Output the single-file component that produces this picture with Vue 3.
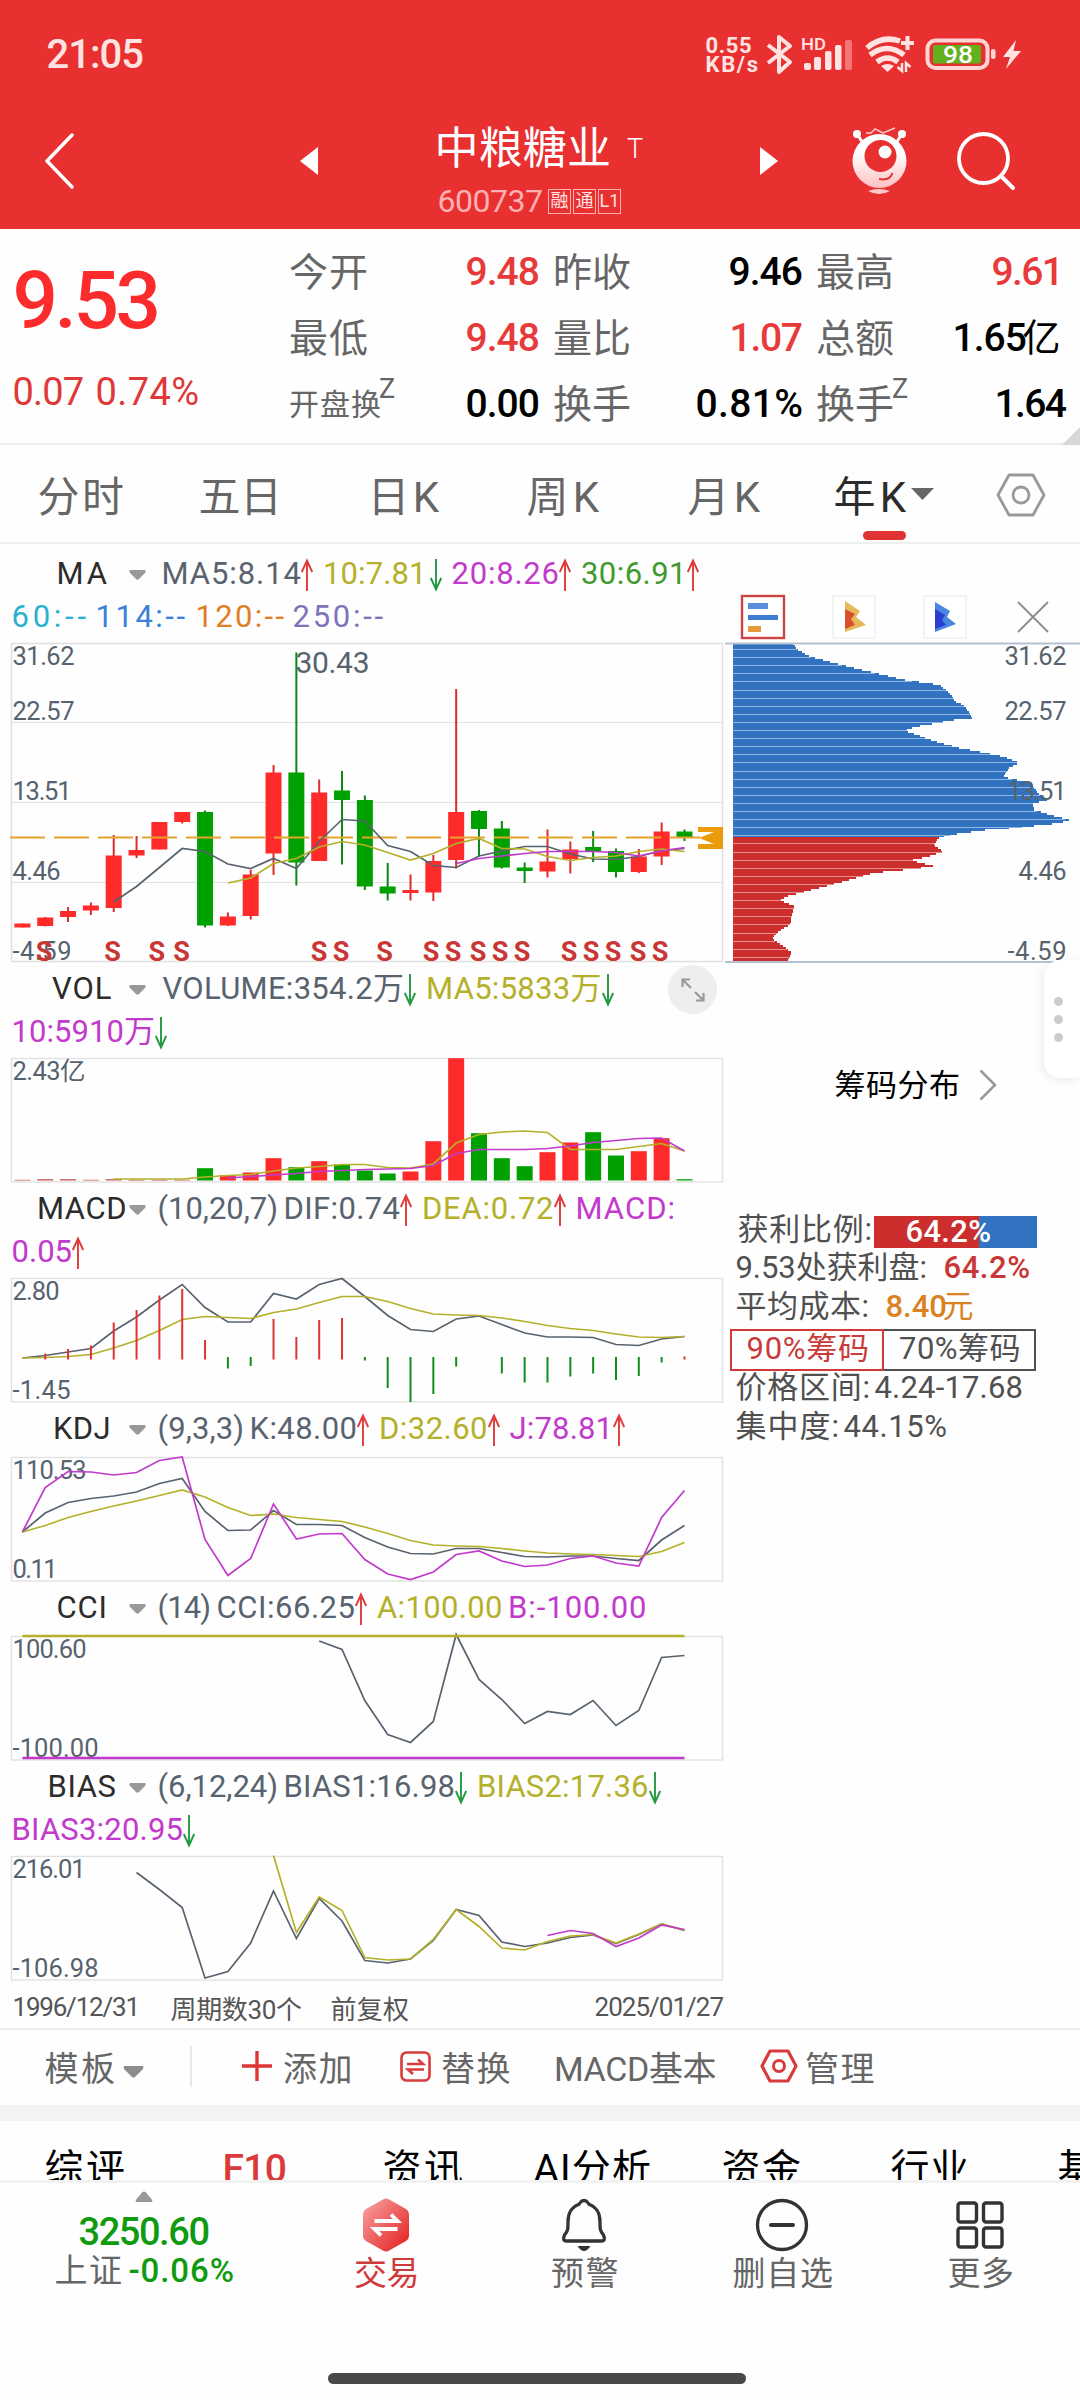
<script setup>
// Spreads a text's letters so that its ink fills the given width.
const fitText = (el, { value }) => {
  if (!value) return
  el.style.letterSpacing = '0px'
  el.style.width = 'auto'
  const n = [...el.textContent].length
  const natural = el.getBoundingClientRect().width
  el.style.letterSpacing = (n > 1 ? (value + 3 - natural) / (n - 1) : 0) + 'px'
  el.style.width = value + 'px'
}
const vFit = { mounted: fitText, updated: fitText }

const quotes = [
  [
    { label: '今开', lw: 76, value: '9.48', w: 70, tone: 'up' },
    { label: '昨收', lw: 75, value: '9.46', w: 70 },
    { label: '最高', lw: 75, value: '9.61', w: 68, tone: 'up' },
  ],
  [
    { label: '最低', lw: 76, value: '9.48', w: 70, tone: 'up' },
    { label: '量比', lw: 75, value: '1.07', w: 69, tone: 'up' },
    { label: '总额', lw: 75, value: '1.65', w: 70, unit: '亿' },
  ],
  [
    { label: '开盘换', lw: 89, small: true, sup: 'Z', value: '0.00', w: 70 },
    { label: '换手', lw: 75, value: '0.81%', w: 103 },
    { label: '换手', lw: 75, sup: 'Z', value: '1.64', w: 68 },
  ],
]

const periods = [
  { t: '分时', w: 82, gap: 39 },
  { t: '五日', w: 79, gap: 79 },
  { t: '日K', w: 67, gap: 90 },
  { t: '周K', w: 68, gap: 92 },
  { t: '月K', w: 68, gap: 93 },
  { t: '年K', w: 68, gap: 78, active: true },
]

const slate = '#58636f'
const olive = '#b5b02a'
const violet = '#c23acb'

const X0 = 22.4
const STEP = 22.83
const cx = (i) => X0 + STEP * i
const line = (start, ys) => ys.map((y, k) => `${cx(start + k).toFixed(1)},${y}`).join(' ')

// [rising, high, body top, body bottom, low]
const candles = [
  [1, 280.5, 280.5, 284.5, 284.5], [1, 274, 274.5, 283, 283.5], [1, 264, 268, 274, 279],
  [1, 259.5, 262.5, 267.5, 272], [1, 192, 212.5, 265, 269], [1, 193, 207, 212.5, 215],
  [1, 179, 179, 206.5, 206.5], [1, 169, 169, 179, 180.5], [0, 167.5, 169, 282.5, 284.5],
  [1, 269.5, 273.5, 282.5, 283], [1, 227, 231.5, 273, 276.5], [1, 122, 129.5, 210.5, 232],
  [0, 9.5, 129.5, 219.5, 242.5], [1, 136.5, 149.5, 218, 218], [0, 128, 147.5, 157, 221.5],
  [0, 152.5, 157, 243.5, 247], [0, 220, 243.5, 250.5, 257.5], [1, 231.5, 247, 250, 257.5],
  [1, 212, 218, 249.5, 258], [1, 46, 169, 217, 225.5], [0, 167, 168, 186, 213.5],
  [0, 178, 185.5, 224.5, 225.5], [0, 219.5, 224.5, 228, 240], [1, 186.5, 218.5, 228.5, 234.5],
  [1, 198.5, 206.5, 216, 230.5], [0, 188, 204, 208, 219], [0, 205.5, 208, 229, 234.5],
  [1, 206, 213.5, 229, 230], [1, 179.5, 188.5, 213.5, 222], [0, 186.5, 188.5, 194.5, 198],
]
const maLines = [
  [slate, line(4, [259, 243.5, 224.5, 205.5, 208.5, 221, 225.5, 215.5, 225.5, 198.5, 176.5, 178, 202.5, 208.5, 222.5, 224.5, 213, 208, 203.5, 203.5, 211, 216, 216.5, 213.5, 207.5, 205.5])],
  [olive, line(9, [240, 235, 220.5, 215.5, 204, 198.5, 202, 209.5, 217, 210.5, 200.5, 195.5, 205.5, 206, 213.5, 217.5, 214.5, 213, 208.5, 206, 208.5])],
  [violet, line(19, [220.5, 215.5, 213, 210.5, 208.5, 208.5, 208.5, 209.5, 213, 208, 204.5])],
]
const sells = [44, 112.6, 156.7, 181.5, 319, 341, 384.6, 431, 453, 478, 500, 522, 569, 591, 613, 638, 660]
const priceMarks = [['31.62', 22, 60], ['22.57', 77, 60], ['13.51', 157, 57], ['4.46', 237, 46], ['-4.59', 316.5, 57]]

const volumes = [0.7, 1.3, 1.3, 0.7, 1.3, 0.7, 0.7, 0.7, 12.3, 5.3, 8, 22.3, 13.3, 19.3, 16, 10, 7, 9, 39.3, 122.3, 47.3, 22.3, 14.3, 28.3, 38, 48.3, 25, 29.3, 42.3, 1.3]

// [index, from, to, rising]
const macdBars = [
  ...[[1, 75.5], [2, 71], [3, 67.5], [4, 44.5], [5, 32], [6, 17.5], [7, 11], [8, 62], [11, 41], [12, 59], [13, 42], [14, 40], [29, 78.5]].map(([i, y]) => [i, y, 81.5, 1]),
  ...[[9, 90.5], [10, 88], [15, 82.5], [16, 110], [17, 124], [18, 116], [19, 88.5], [21, 95.5], [22, 104.5], [23, 104.5], [24, 98.5], [25, 95.5], [26, 102], [27, 98], [28, 84.5]].map(([i, y]) => [i, 79, y, 0]),
]

const panels = [
  {
    name: 'VOL', w: 55, height: 97, pad: 5.5, volume: true,
    rows: [
      [{ t: 'VOLUME:354.2万', w: 237, c: slate, d: 'down', first: 5 }, { t: 'MA5:5833万', w: 171, c: olive, d: 'down' }],
      [{ t: '10:5910万', w: 139, c: violet, d: 'down' }],
    ],
    marks: [['2.43亿', 22, 71]],
    lines: [
      [olive, line(4, [121, 121, 121, 121, 119, 117.5, 116.5, 113, 110, 108.5, 106.5, 106.5, 109.5, 110, 106, 85, 76.5, 74, 73, 74.5, 91.5, 91.5, 91.5, 88.5, 85.5, 93])],
      [violet, line(9, [120, 118.5, 117, 115.5, 113.5, 112.5, 111.5, 111, 110.5, 107.5, 95.5, 91.5, 91.5, 91.5, 90.5, 88, 84.5, 82.5, 80.5, 80, 93])],
    ],
  },
  {
    name: 'MACD', w: 85, height: 96, pad: 4.5, macd: true,
    rows: [
      [{ t: '(10,20,7)', w: 116, c: slate }, { t: 'DIF:0.74', w: 112, c: slate, d: 'up' }, { t: 'DEA:0.72', w: 127, c: olive, d: 'up' }, { t: 'MACD:', w: 95, c: violet }],
      [{ t: '0.05', w: 56, c: violet, d: 'up' }],
    ],
    marks: [['2.80', 22, 45], ['-1.45', 121, 56]],
    lines: [
      [slate, line(0, [80, 77.5, 74, 70.5, 53, 39, 22, 6.5, 29.5, 44, 44, 15.5, 21, 6.5, 0.5, 18.5, 37.5, 51.5, 53.5, 41, 38, 46.5, 55, 59, 59, 59.5, 66.5, 67.5, 61, 58.5])],
      [olive, line(0, [80, 79.5, 78.5, 76.5, 70, 62.5, 52.5, 41.5, 38.5, 39.5, 40.5, 34.5, 31, 24.5, 18.5, 18.5, 23.5, 30.5, 36, 37, 37.5, 40, 43.5, 47.5, 50.5, 52.5, 56, 59, 59.5, 58.5])],
    ],
  },
  {
    name: 'KDJ', w: 53, height: 55, pad: 4.5,
    rows: [[{ t: '(9,3,3)', w: 82, c: slate }, { t: 'K:48.00', w: 103, c: slate, d: 'up' }, { t: 'D:32.60', w: 104, c: olive, d: 'up' }, { t: 'J:78.81', w: 99, c: violet, d: 'up' }]],
    marks: [['110.53', 22, 72], ['0.11', 121, 43]],
    lines: [
      [slate, line(0, [75, 56, 45.5, 41.5, 39, 35, 26.5, 21.5, 54.5, 73.5, 73, 53.5, 67.5, 67.5, 68.5, 80.5, 90, 96.5, 97, 91.5, 91.5, 95.5, 99.5, 100, 99, 99, 101.5, 103.5, 83, 68.5])],
      [olive, line(0, [75, 68.5, 60.5, 54.5, 49, 44, 38.5, 33, 40, 50.5, 58.5, 57, 60.5, 62.5, 64.5, 70, 76.5, 83.5, 88, 89, 89.5, 91.5, 94, 96, 97, 97.5, 98.5, 99.5, 94.5, 85.5])],
      [violet, line(0, [75, 30.5, 14.5, 15, 18, 15.5, 3.5, 0, 82.5, 118.5, 101.5, 47, 82, 77, 76.5, 102.5, 117, 122.5, 115, 97.5, 94, 104, 109.5, 108, 101.5, 99, 106, 109, 60.5, 33.5])],
    ],
  },
  {
    name: 'CCI', w: 46, height: 55, pad: 4.5,
    rows: [[{ t: '(14)', w: 49, c: slate }, { t: 'CCI:66.25', w: 134, c: slate, d: 'up' }, { t: 'A:100.00', w: 121, c: olive }, { t: 'B:-100.00', w: 134, c: violet }]],
    marks: [['100.60', 22, 72], ['-100.00', 121, 84]],
    lines: [
      [slate, line(13, [5, 13.5, 64.5, 98.5, 106.5, 85.5, -1.5, 43.5, 63.5, 87.5, 75.5, 78.5, 64.5, 89.5, 74.5, 21.5, 19.5])],
      [olive, `${cx(0)},0 ${cx(29)},0`],
      [violet, `${cx(0)},122 ${cx(29)},122`],
    ],
  },
  {
    name: 'BIAS', w: 64, height: 96, pad: 4.5,
    rows: [
      [{ t: '(6,12,24)', w: 116, c: slate }, { t: 'BIAS1:16.98', w: 167, c: slate, d: 'down' }, { t: 'BIAS2:17.36', w: 167, c: olive, d: 'down' }],
      [{ t: 'BIAS3:20.95', w: 167, c: violet, d: 'down' }],
    ],
    marks: [['216.01', 22, 71], ['-106.98', 121, 84]],
    lines: [
      [slate, line(5, [16.5, 33.5, 51.5, 122, 115.5, 87, 35, 82.5, 42.5, 65, 104.5, 107, 103, 84.5, 53.5, 59.5, 86, 90.5, 87, 81.5, 79, 87.5, 78.5, 68, 74.5])],
      [olive, line(11, [-0.5, 76.5, 41, 54.5, 101.5, 104, 103, 83.5, 53.5, 70.5, 92, 94, 85.5, 80, 78.5, 87, 78, 68, 74.5])],
      [violet, line(23, [79.5, 74.5, 77.5, 90.5, 82, 69, 73.5])],
    ],
  },
]

const maPanel = {
  name: 'MA', w: 46, height: 99, pad: 7.5, main: true,
  rows: [
    [{ t: 'MA5:8.14', w: 135, c: slate, d: 'up', first: 4 }, { t: '10:7.81', w: 99, c: olive, d: 'down', sp: 6 }, { t: '20:8.26', w: 103, c: violet, d: 'up' }, { t: '30:6.91', w: 101, c: '#3e9a2c', d: 'up' }],
    [{ t: '60:--', w: 70, c: '#2bb0cf', first: 0 }, { t: '114:--', w: 85, c: '#3c7fd6', first: 4 }, { t: '120:--', w: 84, c: '#e07f24', first: 5 }, { t: '250:--', w: 86, c: '#7f74bb', first: 3 }],
  ],
  marks: priceMarks, lines: maLines,
}
const allPanels = [maPanel, ...panels]

// Outline of the cost distribution: [y, reach]
const chipEdge = [
  [0, 59.5], [7, 65], [14, 78], [20, 101], [29, 137.5], [37, 172], [42, 207], [52, 218.6], [58, 221], [62, 230], [69, 236],
  [75, 238.6], [76.5, 224], [80, 205], [84, 181], [88, 172], [94, 189.5], [100, 207], [105, 226.4], [110, 252], [114, 272],
  [120, 286], [125, 276], [134, 270], [140, 298], [150, 304.5], [157.5, 314.5], [160, 300], [167, 301], [172, 317.5],
  [177.5, 338], [182, 313], [187, 252], [192.5, 213], [194, 207], [202, 200], [208.5, 210], [213.5, 196], [217.5, 178],
  [223.5, 202], [227, 170], [230, 140], [240, 105], [248.5, 72.5], [253.5, 53], [257.5, 47], [263, 61], [282, 57],
  [288.5, 45], [296, 39], [302, 49], [310, 59], [318, 54],
]
const reach = (y) => {
  const k = Math.max(1, chipEdge.findIndex((p) => p[0] >= y))
  const [y0, r0] = chipEdge[k - 1]
  const [y1, r1] = chipEdge[k]
  return r0 + ((r1 - r0) * (y - y0)) / (y1 - y0)
}
const chips = Array.from({ length: 159 }, (_, k) => ({ y: k * 2, w: Math.round(reach(k * 2 + 1)) }))
const chipLines = Array.from({ length: 39 }, (_, k) => {
  const y = Math.round(6 + k * 8.1)
  return { y, w: Math.round(reach(y)) }
})

const subTabs = [
  { t: '综评', w: 76, gap: 46 }, { t: 'F10', w: 60, gap: 102, active: true }, { t: '资讯', w: 76, gap: 100 },
  { t: 'AI分析', w: 113, gap: 75 }, { t: '资金', w: 75, gap: 75 }, { t: '行业', w: 74, gap: 94 }, { t: '基', w: 0, gap: 93 },
]
</script>

<template>
  <div class="screen">
    <header>
      <div class="status">
        <span v-fit="93" class="clock">21:05</span>
        <div class="speed"><b v-fit="45">0.55</b><b v-fit="48">KB/s</b></div>
        <svg class="sys" width="270" height="50" viewBox="760 30 270 50">
          <path d="M768 45L790 62L779 72V37L790 46L768 63" fill="none" stroke="#ffe2e2" stroke-width="4" stroke-linejoin="round" />
          <text x="801" y="50" font-size="17" font-weight="500" textLength="25" lengthAdjust="spacingAndGlyphs" fill="#ffe2e2">HD</text>
          <g fill="#ffe2e2">
            <rect x="804" y="63" width="7" height="7" rx="2" /><rect x="814" y="57" width="7" height="13" rx="2" />
            <rect x="825" y="51" width="6.500" height="19" rx="2" /><rect x="835" y="45" width="6.500" height="25" rx="2" />
            <rect x="845" y="40" width="7" height="30" rx="2" opacity=".4" />
          </g>
          <g fill="none" stroke="#ffe2e2" stroke-width="5.500">
            <path d="M867 48Q882 35 900 41" /><path d="M870 55Q887 42 904 55" /><path d="M877 62Q887.500 54 898 62" />
          </g>
          <path d="M881 66Q887.500 62 894 66L887.500 72Z" fill="#ffe2e2" />
          <path d="M901 43H914M907.500 36V50" stroke="#ffe2e2" stroke-width="4" />
          <path d="M902 63V71L897.500 67M906 72V63L910.500 67" fill="none" stroke="#ffe2e2" stroke-width="2.500" />
          <rect x="927.500" y="40.500" width="60" height="27.500" rx="8" fill="none" stroke="#ffd6d6" stroke-width="4" />
          <rect x="933" y="45" width="48" height="18.500" rx="2" fill="#62b01e" />
          <text x="943" y="62.500" font-size="24" font-weight="500" textLength="30" lengthAdjust="spacingAndGlyphs" fill="#fff">98</text>
          <rect x="991" y="49" width="4.500" height="10" rx="2" fill="#ffd6d6" />
          <path d="M1016 40L1003 57H1010L1006 69L1021 51H1013.500Z" fill="#ffe2e2" />
        </svg>
      </div>
      <div class="nav">
        <svg class="back" width="30" height="58"><path d="M28 3L3 29L28 55" fill="none" stroke="#fff" stroke-width="3.500" stroke-linecap="round" stroke-linejoin="round" /></svg>
        <svg class="prev" width="18" height="28"><path d="M0 14L18 0V28Z" fill="#fff" /></svg>
        <div class="title">
          <div class="name"><span v-fit="172">中粮糖业</span><i>T</i></div>
          <div class="code"><span v-fit="101">600737</span><em>融</em><em>通</em><em>L1</em></div>
        </div>
        <svg class="next" width="18" height="28"><path d="M18 14L0 0V28Z" fill="#fff" /></svg>
        <svg class="bot" width="56" height="70" viewBox="852 127 56 70">
          <defs><linearGradient id="bot" x2="0" y2="1"><stop offset=".35" stop-color="#fff" /><stop offset="1" stop-color="#ffc0c0" /></linearGradient></defs>
          <path d="M857 135L863 144M902 135L896 144" stroke="#fff" stroke-width="3" />
          <circle cx="857" cy="135" r="4" fill="#fff" /><circle cx="902" cy="135" r="4" fill="#fff" />
          <path d="M866 134H871L875 130L883 134L895 129" fill="none" stroke="#ffc9c9" stroke-width="1.500" />
          <circle cx="879.500" cy="162" r="27" fill="url(#bot)" />
          <circle cx="880.500" cy="157" r="16" fill="#e83030" /><circle cx="885" cy="153" r="6.500" fill="#fff" />
          <path d="M879 180Q890 182 892.500 174" fill="none" stroke="#e83030" stroke-width="2" />
          <path d="M868 192Q879 188 890 192Q879 198 868 192Z" fill="#ffc9c9" />
        </svg>
        <svg class="search" width="58" height="60" viewBox="957 131 58 60"><circle cx="983.500" cy="158.500" r="24.500" fill="none" stroke="#fff" stroke-width="3.800" /><path d="M1001 176L1013 188" stroke="#fff" stroke-width="4" stroke-linecap="round" /></svg>
      </div>
    </header>

    <section class="quote">
      <div class="last">
        <strong v-fit="144">9.53</strong>
        <p><span v-fit="67">0.07</span><span v-fit="99">0.74%</span></p>
      </div>
      <div class="grid">
        <div v-for="(row, r) in quotes" :key="r" class="qrow">
          <div v-for="(c, k) in row" :key="k" class="cell">
            <span v-fit="c.lw" class="label" :class="{ small: c.small }">{{ c.label }}</span><sup v-if="c.sup">{{ c.sup }}</sup>
            <b v-fit="c.w" :class="c.tone">{{ c.value }}</b><span v-if="c.unit" class="unit">{{ c.unit }}</span>
          </div>
        </div>
      </div>
      <i class="corner"></i>
    </section>

    <nav class="periods">
      <span v-for="p in periods" :key="p.t" class="period" :class="{ active: p.active }" :style="{ marginLeft: p.gap + 'px' }"><span v-fit="p.w">{{ p.t }}</span></span>
      <svg class="drop" width="23" height="12"><path d="M0 0H23L11.500 12Z" fill="#666" /></svg>
      <svg class="gear" width="50" height="44" viewBox="0 0 50 44"><path d="M13 2H37L48 22L37 42H13L2 22Z" fill="none" stroke="#999" stroke-width="2.800" stroke-linejoin="round" /><circle cx="25" cy="22" r="8" fill="none" stroke="#999" stroke-width="2.800" /></svg>
    </nav>

    <main>
      <div class="charts">
        <section v-for="p in allPanels" :key="p.name">
          <div class="legend" :style="{ height: p.height + 'px', paddingTop: p.pad + 'px' }">
            <div v-for="(row, r) in p.rows" :key="r" class="lrow">
              <template v-if="r === 0">
                <span class="iname"><span v-fit="p.w">{{ p.name }}</span></span>
                <svg class="tri" width="17" height="10"><path d="M1 0H16Q17.500 1 16 3L10 9Q8.500 10.500 7 9L1 3Q-.5 1 1 0Z" fill="#999" /></svg>
              </template>
              <span v-for="s in row" :key="s.t" class="seg" :class="{ arrowed: s.d }" :style="{ color: s.c, marginLeft: (s.first || 0) + 'px' }">
                <span v-fit="s.w">{{ s.t }}</span>
                <svg v-if="s.d" width="12" height="32" :class="s.d" :style="{ marginLeft: (s.sp || 3) + 'px' }"><path d="M6 32V1M.8 13L6 1.500L11.200 13" fill="none" :stroke="s.d === 'up' ? '#e03a3a' : '#229a40'" stroke-width="1.900" /></svg>
              </span>
            </div>
            <button v-if="p.volume" class="expand"><svg width="24" height="24"><path d="M1.500 9V1.500H9M1.500 1.500L10 10M22.500 15V22.500H15M22.500 22.500L14 14" fill="none" stroke="#999" stroke-width="2.200" /></svg></button>
          </div>

          <svg v-if="p.main" class="plot" width="723" height="318" viewBox="0 0 723 318">
            <path d="M11 79.500H723M11 159.500H723M11 239.500H723" stroke="#e2e2e2" />
            <rect x="11.500" y=".5" width="711" height="318" fill="none" stroke="#e0e0e0" stroke-width="1.500" />
            <g v-for="(c, i) in candles" :key="i" :fill="c[0] ? '#ff2a2a' : '#00a000'">
              <rect :x="cx(i) - 1" :y="c[1]" width="2" :height="c[4] - c[1]" :fill="c[0] ? '#dd2c2c' : '#078a10'" />
              <rect :x="cx(i) - 8" :y="c[2]" width="16" :height="c[3] - c[2]" />
            </g>
            <path d="M10 194.500H700" stroke="#e6a32b" stroke-width="1.800" stroke-dasharray="35 9" />
            <path d="M698 184H723V206H698V201H714L699 195L714 189H698Z" fill="#eb9c0c" />
            <text x="295.500" y="30" font-size="30" textLength="74" fill="#56636f">30.43</text>
            <polyline v-for="l in p.lines" :key="l[0]" :points="l[1]" fill="none" :stroke="l[0]" stroke-width="1.700" />
            <text v-for="m in p.marks" :key="m[0]" x="12.500" :y="m[1]" font-size="25.500" :textLength="m[2] + 2" fill="#56636f">{{ m[0] }}</text>
            <text v-for="s in sells" :key="s" :x="s" y="317.500" font-size="27" font-weight="700" text-anchor="middle" fill="#c93636">S</text>
          </svg>
          <svg v-else class="plot" width="723" height="124" viewBox="0 0 723 124">
            <rect x="11.500" y=".5" width="711" height="123.500" fill="none" stroke="#e2e2e2" stroke-width="1.400" />
            <template v-if="p.volume">
              <rect v-for="(v, i) in volumes" :key="i" :x="cx(i) - 8" :y="122.500 - v" width="16" :height="v" :fill="i < 8 ? '#c65050' : candles[i][0] ? '#ff2a2a' : '#00a000'" />
            </template>
            <text v-for="m in p.marks" :key="m[0]" x="12.500" :y="m[1]" font-size="25.500" :textLength="m[2] + 2" fill="#56636f">{{ m[0] }}</text>
            <polyline v-for="(l, k) in p.lines" :key="k" :points="l[1]" fill="none" :stroke="l[0]" :stroke-width="p.name === 'CCI' && k ? 2.300 : 1.700" />
            <template v-if="p.macd">
              <rect v-for="(b, i) in macdBars" :key="i" :x="cx(b[0]) - 1" :y="b[1]" width="2" :height="b[2] - b[1]" :fill="b[3] ? '#e03333' : '#0d8f1c'" />
            </template>
          </svg>
        </section>
        <div class="dates">
          <span v-fit="123">1996/12/31</span><span v-fit="127">周期数30个</span><span v-fit="74">前复权</span><span v-fit="125">2025/01/27</span>
        </div>
      </div>

      <aside>
        <div class="tools">
          <svg class="on" width="44" height="44"><rect x="1" y="1" width="42" height="42" fill="#fff" stroke="#cc4444" stroke-width="2.400" /><rect x="7" y="8" width="20" height="6" fill="#5a8edb" /><rect x="7" y="20" width="30" height="5" fill="#3f7dd2" /><rect x="7" y="31" width="13" height="6" fill="#e69a3c" /></svg>
          <svg width="44" height="44"><rect x="1" y="1" width="42" height="42" fill="#fff" stroke="#f3f3f3" stroke-width="2" /><path d="M13 6L28 16L24 22L34 30L13 37Z" fill="#e8b85c" /><path d="M13 14L23 19L19 24L23 30L13 34Z" fill="#d8502f" /></svg>
          <svg width="44" height="44"><rect x="1" y="1" width="42" height="42" fill="#fff" stroke="#f3f3f3" stroke-width="2" /><path d="M12 7L27 16L24 22L33 29L12 37Z" fill="#4a86e0" /><path d="M12 14L22 20L19 25L23 30L12 34Z" fill="#2a3fd0" /></svg>
          <svg class="close" width="32" height="32"><path d="M1 1L31 31M31 1L1 31" stroke="#8c8c8c" stroke-width="1.800" /></svg>
        </div>
        <svg class="plot" width="357" height="318" viewBox="-10 0 357 318">
          <rect v-for="c in chips" :key="c.y" x="0" :y="c.y" :width="c.w" height="2" :fill="c.y < 193 ? '#3173c0' : '#cc2d2d'" shape-rendering="crispEdges" />
          <rect v-for="c in chipLines" :key="c.y" x="0" :y="c.y" :width="c.w" height="1" :fill="c.y < 193 ? '#8fb6e0' : '#e88f8f'" />
          <path d="M-8 .5H347M-8 319H347" stroke="#b4c1d0" stroke-width="2" />
          <text v-for="m in priceMarks" :key="m[0]" :x="333.500 - m[2] - 2" :y="m[1]" font-size="25.500" :textLength="m[2] + 2" fill="#56636f">{{ m[0] }}</text>
        </svg>
        <a class="chiplink"><span v-fit="121">筹码分布</span><svg width="18" height="32"><path d="M1.500 1.500L16 16L1.500 30.500" fill="none" stroke="#999" stroke-width="2.500" /></svg></a>
        <div class="stats">
          <p class="first"><span v-fit="130">获利比例:</span><span class="ratio"><b v-fit="81">64.2%</b></span></p>
          <p><span v-fit="187">9.53处获利盘:</span><b v-fit="82" class="red">64.2%</b></p>
          <p><span v-fit="129">平均成本:</span><b v-fit="57" class="orange">8.40</b><span class="orange yuan">元</span></p>
          <div class="switch"><span class="on"><span v-fit="118">90%筹码</span></span><span><span v-fit="117">70%筹码</span></span></div>
          <p><span v-fit="130">价格区间:</span><span v-fit="144" class="val">4.24-17.68</span></p>
          <p><span v-fit="99">集中度:</span><span v-fit="99" class="val">44.15%</span></p>
        </div>
        <div class="handle"><i></i><i></i><i></i></div>
      </aside>
    </main>

    <div class="toolbar">
      <span v-fit="66">模板</span>
      <svg class="t1" width="21" height="13"><path d="M1 1Q0 3 1.500 4.500L9 12Q10.500 13 12 12L19.500 4.500Q21 3 20 1Z" fill="#8d8d8d" /></svg>
      <i class="sep"></i>
      <svg class="t2" width="30" height="30"><path d="M15 0V30M0 15H30" stroke="#de3535" stroke-width="3.400" /></svg><span v-fit="65">添加</span>
      <svg class="t3" width="31" height="31"><rect x="1.500" y="1.500" width="28" height="28" rx="5" fill="none" stroke="#d83b3b" stroke-width="2.600" /><path d="M7 13H23L18 8.500M24 18.500H8L13 23" fill="none" stroke="#d83b3b" stroke-width="2.600" /></svg><span v-fit="65">替换</span>
      <span v-fit="158" class="tm">MACD基本</span>
      <svg class="t4" width="38" height="34"><path d="M10 2H28L36 17L28 32H10L2 17Z" fill="none" stroke="#d83b3b" stroke-width="3.200" stroke-linejoin="round" /><circle cx="19" cy="17" r="5.500" fill="none" stroke="#d83b3b" stroke-width="3" /></svg><span v-fit="65">管理</span>
    </div>

    <div class="subtabs">
      <span v-for="s in subTabs" :key="s.t" v-fit="s.w" :class="{ active: s.active }" :style="{ marginLeft: s.gap + 'px' }">{{ s.t }}</span>
    </div>

    <footer>
      <div class="index">
        <svg width="18" height="11"><path d="M1 11Q0 10 1.500 8L7.500 1Q9 0 10.500 1L16.500 8Q18 10 17 11Z" fill="#999" /></svg>
        <b v-fit="127">3250.60</b>
        <p><span v-fit="63">上证</span><b v-fit="101">-0.06%</b></p>
      </div>
      <div class="item trade">
        <svg width="48" height="54"><defs><linearGradient id="trade" x2="1" y2="1"><stop offset="0" stop-color="#f7a6a6" /><stop offset="1" stop-color="#e41b1b" /></linearGradient></defs><path d="M20 2Q24 -1 28 2L44 11Q47 13 47 16V38Q47 41 44 43L28 52Q24 55 20 52L4 43Q1 41 1 38V16Q1 13 4 11Z" fill="url(#trade)" /><path d="M12.500 23H35.500L29 16.500M35.500 31H12.500L19 37.500" fill="none" stroke="#fff" stroke-width="3.800" /></svg>
        <span v-fit="61">交易</span>
      </div>
      <div class="item">
        <svg width="46" height="54"><path d="M23 2.500C19 2.500 20 5 17.500 6.500C9 10 7 16 7 24C7 31 7 33 3.500 37Q1 43 5.500 43H40.500Q45 43 42.500 37C39 33 39 31 39 24C39 16 37 10 28.500 6.500C26 5 27 2.500 23 2.500Z" fill="none" stroke="#333" stroke-width="3.300" stroke-linejoin="round" /><path d="M16.500 48H29.500Q23 58 16.500 48Z" fill="#333" /></svg>
        <span v-fit="63">预警</span>
      </div>
      <div class="item">
        <svg width="54" height="54"><circle cx="27" cy="27" r="24.500" fill="none" stroke="#333" stroke-width="3.300" /><path d="M16 27H38" stroke="#333" stroke-width="4" stroke-linecap="round" /></svg>
        <span v-fit="96">删自选</span>
      </div>
      <div class="item">
        <svg width="50" height="54"><g fill="none" stroke="#333" stroke-width="3.400"><rect x="3" y="5" width="18.500" height="19" rx="2.500" /><rect x="28.500" y="5" width="18.500" height="19" rx="2.500" /><rect x="3" y="30" width="18.500" height="19" rx="2.500" /><rect x="28.500" y="30" width="18.500" height="19" rx="2.500" /></g></svg>
        <span v-fit="62">更多</span>
      </div>
    </footer>
    <div class="home"></div>
  </div>
</template>

<style>
body { background: #fff; }
</style>

<style scoped>
* { box-sizing: border-box; }
.screen { width: 1080px; height: 2400px; overflow: hidden; background: #fefefe; font-family: Roboto, "Noto Sans CJK SC", sans-serif; color: #333; display: flex; flex-direction: column; position: relative; }
.screen > * { flex: none; }
span, b, strong, em { display: inline-block; white-space: nowrap; flex: none; text-indent: -1.5px; }
p { margin: 0; }
svg { display: block; flex: none; overflow: visible; }
text { white-space: pre; }
i, em { font-style: normal; }

header { height: 229px; background: #e83030; color: #fff; }
.status { display: flex; align-items: center; height: 109px; padding-left: 48px; }
.clock { font-size: 40px; font-weight: 500; color: #ffe2e2; }
.speed { margin-left: 566px; display: flex; flex-direction: column; font-size: 22px; line-height: 19px; color: #ffe2e2; }
.speed b { font-weight: 700; }
.sys { margin-left: 5px; }
.nav { display: flex; align-items: center; height: 104px; padding-left: 44px; }
.prev { margin-left: 226px; }
.title { margin-left: 118px; width: 186px; height: 120px; margin-top: 16px; }
.name { display: flex; align-items: center; height: 70px; padding-top: 2px; font-size: 44px; }
.name i { font-size: 27px; font-weight: 300; margin: 7px 0 0 19px; }
.code { display: flex; align-items: center; height: 44px; padding-left: 3px; font-size: 32px; color: #ffb0b0; }
.code em { width: 23px; height: 25px; margin-left: 2px; border: 1.5px solid #ffb0b0; font-size: 18px; line-height: 22px; text-align: center; text-indent: 0; color: #ffe2e2; }
.code span + em { margin-left: 8px; }
.next { margin-left: 138px; }
.bot { margin-left: 74px; }
.search { margin-left: 49px; }

.quote { height: 216px; display: flex; position: relative; border-bottom: 2px solid #ececec; }
.last { width: 289px; padding: 32px 0 0 14px; display: flex; flex-direction: column; align-items: flex-start; }
.last strong { font-size: 80px; font-weight: 500; line-height: 80px; color: #fc2c2c; }
.last p { display: flex; gap: 16px; margin-top: 29px; font-size: 38px; line-height: 44px; color: #e03838; }
.grid { padding-top: 10px; }
.qrow { display: flex; gap: 16px; }
.cell { width: 248px; height: 66px; display: flex; align-items: center; font-size: 39px; line-height: 64px; color: #666; }
.cell:nth-child(2) { width: 247px; }
.cell:nth-child(3) { width: 245px; }
.qrow:last-child .cell:nth-child(3) { width: 248px; }
.cell b { font-weight: 500; margin-left: auto; color: #000; }
.cell b.up { color: #e83a3a; }
.cell .label { text-indent: 0; padding-top: 2px; }
.cell .unit { width: 37px; color: #000; font-size: 38px; }
.cell .small { font-size: 30px; }
sup { font-size: 27px; line-height: 30px; margin: -30px 0 0 1px; }
.corner { position: absolute; right: 0; bottom: -2px; border: 9px solid transparent; border-right-color: #d8d8d8; border-bottom-color: #d8d8d8; }

.periods { height: 99px; display: flex; border-bottom: 2px solid #efefef; align-items: flex-start; padding-top: 26px; color: #666; }
.period { font-size: 42px; line-height: 54px; height: 71px; text-indent: 0; }
.period.active { color: #2c2c2c; border: 0; position: relative; }
.period.active::after { content: ""; position: absolute; left: 28px; bottom: 2px; width: 43px; height: 9px; border-radius: 5px; background: #e03232; }
.drop { margin: 17px 0 0 8px; }
.gear { margin: 2px 0 0 62px; }

main { display: flex; height: 1484px; }
.charts { width: 723px; }
.legend { position: relative; font-size: 31px; }
.lrow { height: 43px; line-height: 43px; display: flex; align-items: center; padding-left: 13px; }
.lrow:first-child { padding-left: 33px; }
.iname { width: 96px; text-align: center; text-indent: 0; color: #2c2c2c; }
.tri { margin: 3px 13px 0 0; }
.seg { display: flex; align-items: center; text-indent: 0; }
.seg span { text-indent: -1.5px; }
.seg + .seg { padding-left: 10px; }
.seg.arrowed + .seg { padding-left: 11.5px; }
.seg svg { margin-top: 4px; }
.seg svg.down { transform: rotate(180deg); }
.expand { position: absolute; left: 668px; top: 4px; width: 49px; height: 49px; border: 0; border-radius: 50%; background: #eee; display: grid; place-items: center; padding: 0; }
.dates { display: flex; align-items: center; height: 49px; padding: 5px 2px 0 14px; font-size: 26px; color: #555; }
.dates span:nth-child(2) { margin-left: 35px; }
.dates span:nth-child(3) { margin-left: 33px; }
.dates span:nth-child(4) { margin-left: auto; }

aside { width: 357px; position: relative; }
.tools { height: 99px; display: flex; align-items: center; padding: 46px 0 0 18px; gap: 47px; }
.tools .close { margin-left: 3px; }
.chiplink { display: flex; align-items: center; height: 40px; margin: 101px 0 0 113px; font-size: 31px; color: #000; }
.chiplink svg { margin: 5px 0 0 22px; }
.stats { margin-top: 108px; padding-left: 14px; font-size: 31px; color: #505050; }
.stats p { display: flex; align-items: center; height: 39px; line-height: 39px; }
.stats p.first { padding-left: 2px; height: 38px; }
.stats b { font-weight: 500; }
.ratio { width: 163px; height: 32px; margin: 6px 0 0 5px; padding-left: 33px; line-height: 32px; text-indent: 0; color: #fff; background: linear-gradient(90deg, #cc2d2d 64.4%, #3173c0 64.4%); }
.ratio b { text-indent: -1.5px; }
.red { color: #c93636; margin-left: 21px; }
.orange { color: #d9821f; margin-left: 21px; }
.yuan { margin-left: 0; }
.val { margin-left: 9px; }
.switch { display: flex; margin: 3px 0 -3px -7px; height: 42px; line-height: 36px; }
.switch > span { border: 2px solid #505050; width: 152px; text-align: center; text-indent: 0; border-left: 0; }
.switch > span.on { border: 2px solid #d03a3a; color: #c93a3a; width: 154px; }
.handle { position: absolute; right: 0; top: 416px; width: 36px; height: 118px; border-radius: 16px 0 0 16px; background: #fff; box-shadow: -2px 2px 10px rgba(0, 0, 0, .08); display: flex; flex-direction: column; align-items: center; justify-content: center; gap: 9px; padding-right: 7px; }
.handle i { width: 9px; height: 9px; border-radius: 50%; background: #ccc; }

.toolbar { height: 77px; display: flex; align-items: center; border-top: 2px solid #ececec; padding: 0 0 3px 46px; font-size: 34px; color: #666; }
.t1 { margin: 10px 0 0 11px; }
.sep { width: 1.5px; height: 41px; background: #e8e8e8; margin-left: 46px; }
.t2 { margin: 0 13px 0 50px; }
.t3 { margin: 0 12px 0 50px; }
.tm { margin-left: 48px; }
.t4 { margin: 0 9px 0 46px; }
.subtabs { height: 75px; border-top: 16px solid #f3f3f3; padding-top: 18px; display: flex; overflow: hidden; font-size: 39px; line-height: 60px; color: #000; }
.subtabs .active { color: #d93a3a; font-weight: 500; }

footer { height: 120px; display: flex; border-top: 3px solid #f2f2f2; font-size: 33px; color: #666; }
.index { width: 287px; display: flex; flex-direction: column; align-items: center; color: #109a10; }
.index svg { margin-top: 8px; }
.index b { font-size: 38px; font-weight: 500; line-height: 44px; margin-top: 8px; }
.index p { display: flex; gap: 11px; line-height: 40px; margin-top: -3px; font-size: 33px; }
.index p b { font-size: 33px; line-height: 40px; margin: 0; }
.index p span { color: #666; }
.item { width: 198px; display: flex; flex-direction: column; align-items: center; padding-top: 15px; line-height: 40px; }
.item svg { margin-bottom: 2px; }
.trade { color: #d03a3a; }
.home { position: absolute; left: 328px; top: 2373px; width: 418px; height: 11px; border-radius: 6px; background: #484848; }
</style>
